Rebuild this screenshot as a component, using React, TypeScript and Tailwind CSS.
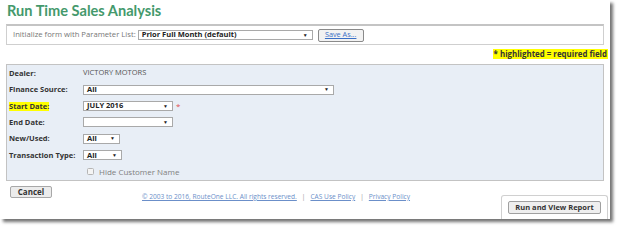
import React from "react";

function Sel({ w, value }: { w: string; value?: string }) {
  return (
    <div
      className={`${w} h-[10px] bg-white border border-[#a9a9a9] flex items-center justify-between pl-[3px] pr-[4px] text-[7.5px] font-bold text-[#222] leading-none`}
    >
      <span>{value ?? ""}</span>
      <span className="text-[5px] text-[#222]">▼</span>
    </div>
  );
}

function Row({ label, hl, children }: { label: string; hl?: boolean; children?: React.ReactNode }) {
  return (
    <div className="h-[16.7px] flex items-center leading-none">
      <div className="w-[76px] pl-[2px] flex items-center">
        <span className={`text-[7.5px] font-bold text-[#333] leading-[9px] ${hl ? "bg-[#ffff00]" : ""}`}>{label}</span>
      </div>
      {children}
    </div>
  );
}

export default function App() {
  return (
    <div className="w-[618px] h-[227px] bg-white overflow-hidden" style={{ fontFamily: '"Open Sans", "Liberation Sans", sans-serif' }}>
      <div className="w-[610px] h-[219px] bg-white shadow-[3px_3px_3px_rgba(0,0,0,0.55)] flex flex-col">
        <div
          className="h-[23px] pl-[7px] text-[14.6px] font-bold leading-[21px] text-[#44996c]"
          style={{ fontFamily: 'Lato, "Open Sans", sans-serif' }}
        >
          Run Time Sales Analysis
        </div>
        <div className="mx-[6px] mt-[1px] h-[21px] border border-[#cfcfcf] border-t-2 border-t-[#c4c4c4] flex items-center pl-[6px] leading-none">
          <span className="text-[7.7px] text-[#777] leading-none">Initialize form with Parameter List:</span>
          <div className="ml-[2px]">
            <Sel w="w-[175px]" value="Prior Full Month (default)" />
          </div>
          <div className="ml-[5px] h-[13px] w-[46px] border border-[#8a8a8a] rounded-[2px] bg-[#f2f2f2] flex items-center justify-center">
            <span className="text-[7.3px] text-[#3a6fc6] underline leading-none">Save As...</span>
          </div>
        </div>
        <div className="flex justify-end mr-[2px] mt-[4px] h-[10px] leading-none">
          <span className="bg-[#ffff00] text-[7.9px] font-bold text-[#333] leading-[10px] px-[1px]">* highlighted = required field</span>
        </div>
        <div className="mx-[6px] mt-[5px] h-[117px] border border-[#c3c3c3] bg-[#e8eef6] flex flex-col">
          <Row label="Dealer:">
            <span className="text-[7.5px] text-[#555] leading-none">VICTORY MOTORS</span>
          </Row>
          <Row label="Finance Source:">
            <Sel w="w-[251px]" value="All" />
          </Row>
          <Row label="Start Date:" hl>
            <Sel w="w-[90px]" value="JULY 2016" />
            <span className="ml-[3px] text-[8px] text-[#e05050] leading-none">*</span>
          </Row>
          <Row label="End Date:">
            <Sel w="w-[90px]" />
          </Row>
          <Row label="New/Used:">
            <Sel w="w-[37px]" value="All" />
          </Row>
          <Row label="Transaction Type:">
            <Sel w="w-[39px]" value="All" />
          </Row>
          <div className="h-[16.7px] flex items-center pl-[80px] leading-none">
            <div className="w-[7px] h-[7px] border border-[#b5b5b5] rounded-[1.5px] bg-[#f4f4f4]" />
            <span className="ml-[5px] text-[8px] text-[#808080] leading-none">Hide Customer Name</span>
          </div>
        </div>
        <div className="flex flex-1 min-h-0 leading-none">
          <div className="ml-[10px] mt-[5px] h-[12px] w-[42px] border border-[#a8a8a8] rounded-[2px] bg-[#ececec] flex items-center justify-center">
            <span className="text-[8px] font-bold text-[#333] leading-none">Cancel</span>
          </div>
          <div className="ml-[90px] mt-[13px] flex items-start text-[6.6px] leading-none text-[#6b8fc9]">
            <span className="underline">© 2003 to 2016, RouteOne LLC. All rights reserved.</span>
            <span className="mx-[5px] text-[#999]">|</span>
            <span className="underline">CAS Use Policy</span>
            <span className="mx-[5px] text-[#999]">|</span>
            <span className="underline">Privacy Policy</span>
          </div>
          <div className="flex-1" />
          <div className="mr-[2px] mt-[14px] w-[107px] border-l border-r border-t border-[#d0d0d0] rounded-t-[3px] flex justify-center pt-[5px]">
            <div className="h-[13px] w-[93px] border border-[#a0a0a0] rounded-[2px] bg-[#efefef] flex items-center justify-center">
              <span className="text-[7.5px] font-bold text-[#333] leading-none">Run and View Report</span>
            </div>
          </div>
        </div>
      </div>
    </div>
  );
}
